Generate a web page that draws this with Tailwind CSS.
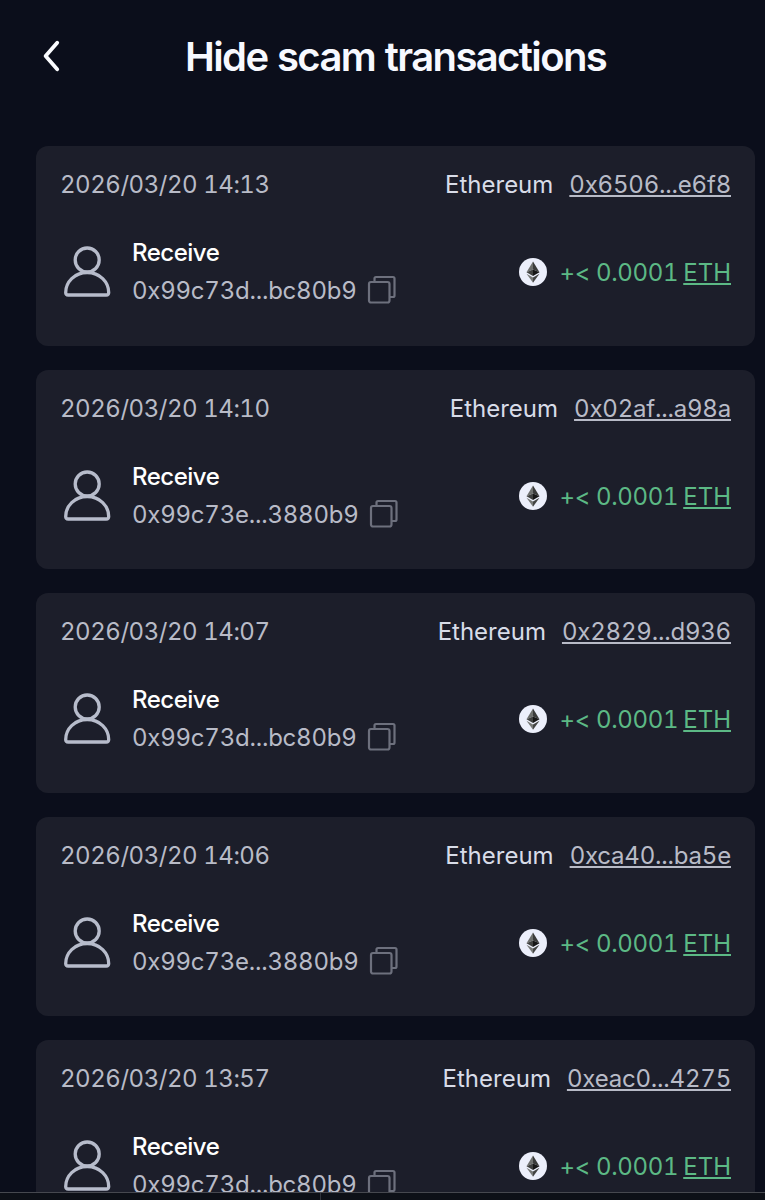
<!DOCTYPE html>
<html lang="en">
  <head>
    <meta charset="UTF-8" />
    <meta name="viewport" content="width=device-width, initial-scale=1.0" />
    <title>Hide scam transactions</title>
    <script src="https://cdn.jsdelivr.net/npm/@tailwindcss/browser@4"></script>
  </head>

  <body class="bg-[#0b0e1b] font-['Inter',sans-serif] h-[1200px] overflow-hidden flex flex-col">
    <main class="h-[1192px] shrink-0 overflow-hidden">
      <header class="h-[146px] pl-[42px] pt-[32px] flex items-start">
        <button class="w-[20px] h-[48px] flex items-center">
          <svg class="w-[20px] h-[32px]" viewBox="0 0 20 32" fill="none" stroke="#fbfcff" stroke-width="3.8" stroke-linecap="round" stroke-linejoin="round">
            <path d="M15.2 2.7 3.6 16l11.6 13.3" />
          </svg>
        </button>
        <h1 class="ml-[123px] mt-px text-[40px] leading-[48px] font-semibold tracking-[-1.6px] [word-spacing:1px] text-[#f7f9ff] whitespace-nowrap">Hide scam transactions</h1>
      </header>

      <ul id="txList" class="pl-[36px] pr-[10px] flex flex-col gap-[24px]"></ul>
    </main>

    <!-- bottom bar -->
    <footer class="h-[8px] shrink-0 bg-[#0d1017] border-t border-[#46484f] flex">
      <div class="w-[321px] border-r border-[#30333b]"></div>
    </footer>

    <script>
      const transactions = [
        { time: "2026/03/20 14:13", hash: "0x6506...e6f8", from: "0x99c73d...bc80b9" },
        { time: "2026/03/20 14:10", hash: "0x02af...a98a", from: "0x99c73e...3880b9" },
        { time: "2026/03/20 14:07", hash: "0x2829...d936", from: "0x99c73d...bc80b9" },
        { time: "2026/03/20 14:06", hash: "0xca40...ba5e", from: "0x99c73e...3880b9" },
        { time: "2026/03/20 13:57", hash: "0xeac0...4275", from: "0x99c73d...bc80b9" },
      ];

      const txList = document.getElementById("txList");

      transactions.forEach((tx) => {
        const li = document.createElement("li");
        li.className =
          "h-[199.6px] shrink-0 rounded-[12px] bg-[#1c1e2a] pl-[24px] pr-[24px] pt-[23px] text-[24px] leading-[32px] tabular-nums whitespace-nowrap";
        li.innerHTML = `
          <div class="flex justify-between text-[#b8bbc7]">
            <span class="tracking-[-0.46px]">${tx.time}</span>
            <div class="flex gap-[16px]">
              <span class="text-[#d8dce8]">Ethereum</span>
              <span class="tracking-[-0.2px] underline decoration-2 underline-offset-[2px]">${tx.hash}</span>
            </div>
          </div>
          <div class="mt-[32px] flex items-center h-[80px]">
            <svg class="w-[52px] h-[56px] ml-px mb-[4px] shrink-0" viewBox="0 0 52 56" fill="none" stroke="#b7bccb" stroke-width="3.3">
              <circle cx="26.2" cy="17" r="12" />
              <path d="M26.2 29.5C13.5 29.5 4.7 39 4.7 49.5c0 1.6 1 2.5 2.5 2.5h38c1.5 0 2.5-.9 2.5-2.5 0-10.5-8.8-20-21.5-20z" stroke-linejoin="round" />
            </svg>
            <div class="ml-[19px] mt-[4px]">
              <div class="h-[38px] text-white font-medium tracking-[-0.5px]">Receive</div>
              <div class="h-[38px] flex text-[#b8bbc7]">
                <span class="tracking-[-0.23px]">${tx.from}</span>
                <svg class="ml-[10px] w-[30px] h-[30px]" viewBox="0 0 30 30" fill="none" stroke="#6d707d" stroke-width="2.2">
                  <rect x="2" y="7" width="20.5" height="20.5" rx="2" />
                  <path d="M7.5 7V3.5a1.5 1.5 0 0 1 1.5-1.5H26a1.5 1.5 0 0 1 1.5 1.5V20.5a1.5 1.5 0 0 1-1.5 1.5H22.5" />
                </svg>
              </div>
            </div>
            <div class="ml-auto flex items-center text-[#5cb985]">
              <svg class="w-[28px] h-[28px] mb-[2px]" viewBox="0 0 28 28">
                <circle cx="14" cy="14" r="14" fill="#eceffb" />
                <path d="M14 3.5 7.5 14.3 14 11.4z" fill="#6e706e" />
                <path d="M14 3.5v7.9l6.5 2.9z" fill="#3b3c3b" />
                <path d="M7.5 14.3 14 18v-6.6z" fill="#3f403f" />
                <path d="M20.5 14.3 14 18v-6.6z" fill="#161616" />
                <path d="M7.5 15.7 14 24.7v-5.2z" fill="#777977" />
                <path d="M20.5 15.7 14 24.7v-5.2z" fill="#434443" />
              </svg>
              <span class="ml-[12px] tracking-[-0.33px]">+&lt; 0.0001</span>
              <span class="ml-[5px] underline decoration-2 underline-offset-[2px]">ETH</span>
            </div>
          </div>
        `;
        txList.appendChild(li);
      });
    </script>
  </body>
</html>
